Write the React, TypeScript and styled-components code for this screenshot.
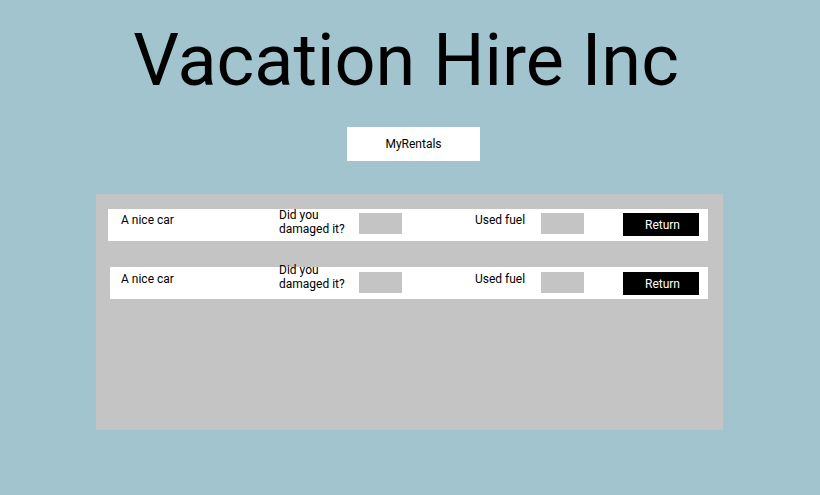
import React from "react";
import styled, { createGlobalStyle } from "styled-components";

const Global = createGlobalStyle`
  html, body {
    margin: 0;
    padding: 0;
    background: #a2c4cf;
    font-family: Roboto, "Liberation Sans", sans-serif;
    color: #000;
  }
`;

const Page = styled.div`
  width: 820px;
  height: 495px;
  box-sizing: border-box;
  padding-right: 1px;
  display: flex;
  flex-direction: column;
  align-items: center;
  overflow: hidden;
`;

const Title = styled.h1`
  margin: 18px 7px 0 0;
  font-size: 72px;
  font-weight: 400;
  line-height: 86px;
`;

const NavButton = styled.button`
  margin: 23px 0 0 8px;
  width: 133px;
  height: 34px;
  background: #fff;
  border: none;
  font-family: Roboto, "Liberation Sans", sans-serif;
  font-size: 12px;
  color: #000;
  padding: 0;
`;

const Panel = styled.div`
  margin-top: 33px;
  width: 627px;
  height: 236px;
  background: #c4c4c4;
  box-sizing: border-box;
  padding: 15px 15px 0 12px;
  display: flex;
  flex-direction: column;
  gap: 26px;
`;

const Row = styled.div<{ $inset: number; $top: number }>`
  height: 32px;
  margin-left: ${(p) => p.$inset}px;
  background: #fff;
  display: flex;
  align-items: flex-start;
  box-sizing: border-box;
  padding: ${(p) => p.$top}px 0 0 ${(p) => 13 - p.$inset}px;
  font-size: 12px;
  line-height: 15px;
`;

const Name = styled.span`
  width: 158px;
`;

const Question = styled.span<{ $lift: number }>`
  width: 80px;
  line-height: 14px;
  margin-top: ${(p) => -p.$lift}px;
`;

const Field = styled.div`
  width: 43px;
  height: 21px;
  background: #c4c4c4;
`;

const FuelLabel = styled.span`
  margin-left: 73px;
  width: 66px;
`;

const ReturnButton = styled.button`
  margin-left: 39px;
  width: 76px;
  height: 23px;
  background: #000;
  color: #fff;
  border: none;
  padding: 0 0 0 3px;
  font-family: Roboto, "Liberation Sans", sans-serif;
  font-size: 12px;
`;

type Rental = { name: string; inset: number; top: number; lift: number };

const rentals: Rental[] = [
  { name: "A nice car", inset: 0, top: 4, lift: 5 },
  { name: "A nice car", inset: 2, top: 5, lift: 9 },
];

export default function App() {
  return (
    <Page>
      <Global />
      <Title>Vacation Hire Inc</Title>
      <NavButton>MyRentals</NavButton>
      <Panel>
        {rentals.map((r, i) => (
          <Row key={i} $inset={r.inset} $top={r.top}>
            <Name>{r.name}</Name>
            <Question $lift={r.lift}>
              Did you
              <br />
              damaged it?
            </Question>
            <Field />
            <FuelLabel>Used fuel</FuelLabel>
            <Field />
            <ReturnButton>Return</ReturnButton>
          </Row>
        ))}
      </Panel>
    </Page>
  );
}
